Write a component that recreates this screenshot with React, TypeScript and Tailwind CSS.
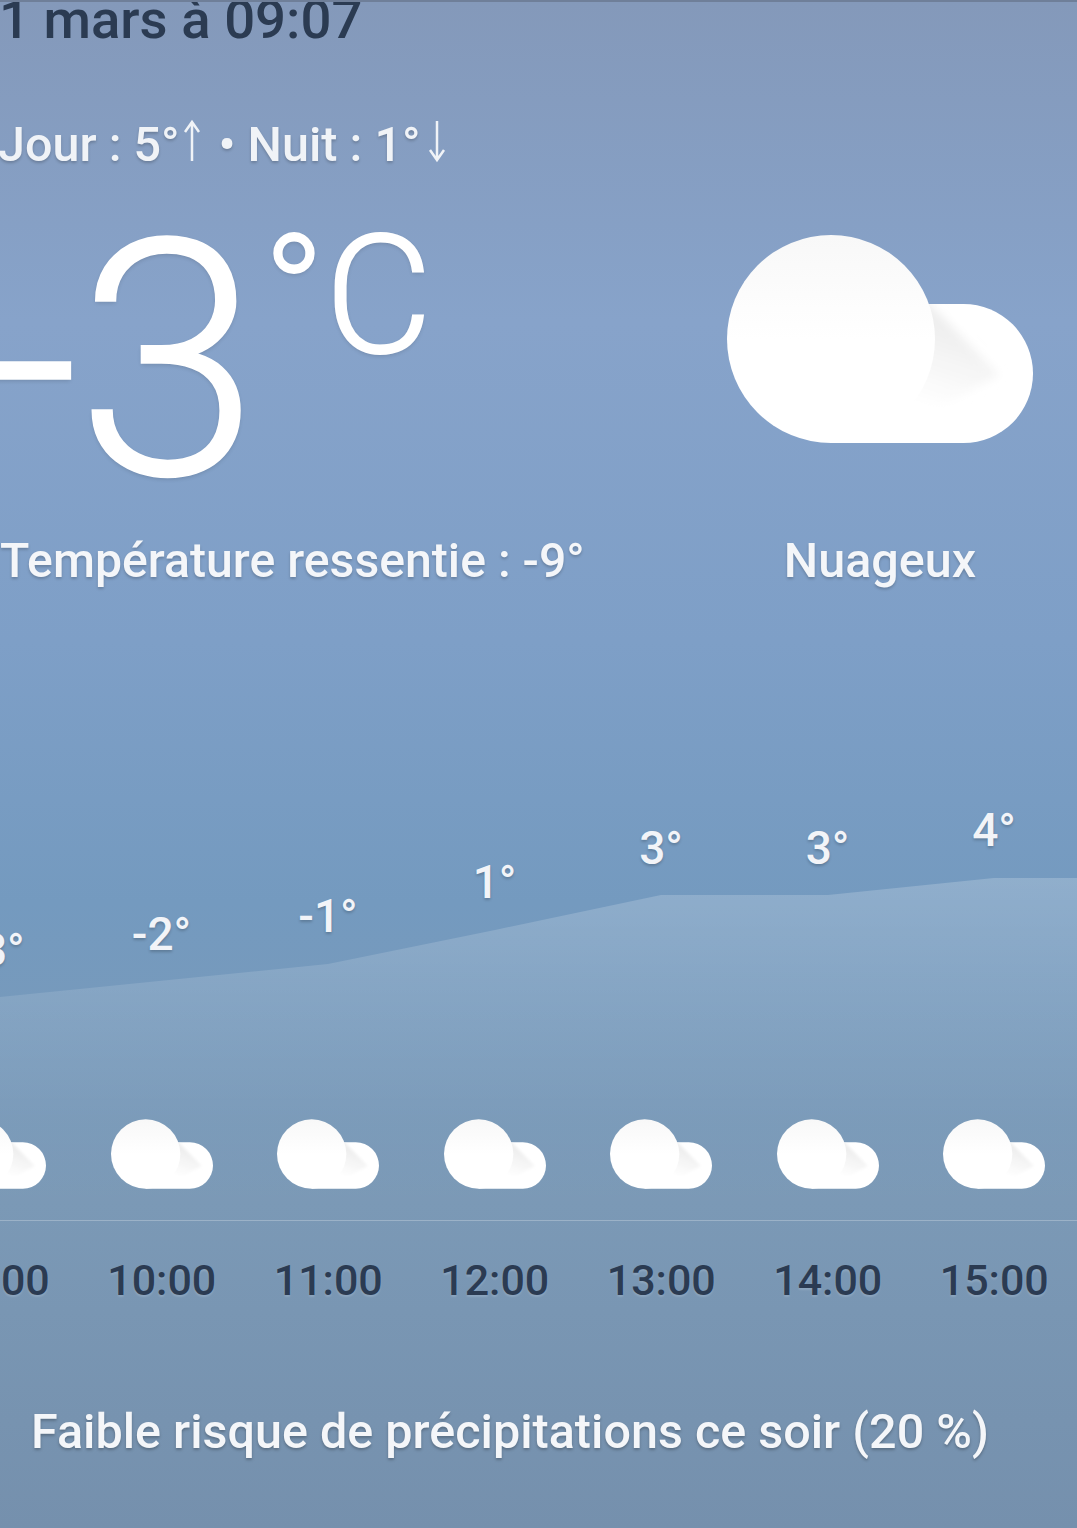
const hours = [
  { t: "09:00", v: "-3°", y: 950 },
  { t: "10:00", v: "-2°", y: 934 },
  { t: "11:00", v: "-1°", y: 916 },
  { t: "12:00", v: "1°", y: 882 },
  { t: "13:00", v: "3°", y: 848 },
  { t: "14:00", v: "3°", y: 848 },
  { t: "15:00", v: "4°", y: 830 },
];

function Cloud({ className, id }: { className: string; id: string }) {
  return (
    <svg viewBox="0 0 306 208" className={className}>
      <defs>
        <linearGradient id={`${id}-s`} x1="205" y1="85" x2="180" y2="165" gradientUnits="userSpaceOnUse">
          <stop offset="0" stopColor="#eeeeee" />
          <stop offset="1" stopColor="#ffffff" />
        </linearGradient>
        <linearGradient id={`${id}-c`} x1="0" y1="0" x2="0" y2="1">
          <stop offset="0" stopColor="#f8f8f8" />
          <stop offset="0.5" stopColor="#ffffff" />
        </linearGradient>
        <filter id={`${id}-b`} x="-20%" y="-20%" width="140%" height="140%">
          <feGaussianBlur stdDeviation="5" />
        </filter>
        <clipPath id={`${id}-l`}>
          <path d="M104 208H236.5a69.5 69.5 0 0 0 0-139H104Z" />
        </clipPath>
      </defs>
      <path d="M104 208H236.5a69.5 69.5 0 0 0 0-139H104Z" fill="#fff" />
      <g clipPath={`url(#${id}-l)`}>
        <path d="M196 62L272 140 L170 195Z" fill={`url(#${id}-s)`} filter={`url(#${id}-b)`} />
      </g>
      <circle cx="104" cy="104" r="104" fill={`url(#${id}-c)`} />
    </svg>
  );
}

export default function App() {
  return (
    <div className="relative w-[1077px] h-[1528px] overflow-hidden border-t-2 border-[#6f7f99] bg-[linear-gradient(180deg,#8499ba_0px,#87a3ca_320px,#7e9fc7_640px,#749abf_900px,#7b99b6_1200px,#7590ad_1528px)] font-['Roboto',sans-serif] text-white">
      <div className="mt-[-11px] ml-[-32px] text-[54.5px] leading-[56px] font-medium text-[#2b3b52]">11 mars à 09:07</div>

      <div className="mt-[71px] ml-[-2px] flex items-center text-[48.5px] leading-[54px] font-medium text-[#f0f3f7] [text-shadow:0_2px_3px_rgba(0,0,0,0.2)]">
        <span>Jour : 5°</span>
        <svg viewBox="0 0 24 44" className="w-[24px] h-[44px] mt-[-8px] shrink-0" fill="none" stroke="#f0f3f7" strokeWidth="2.5">
          <path d="M12 42V4M5 13L12 3l7 10" />
        </svg>
        <span className="ml-[15px]">• Nuit : 1°</span>
        <svg viewBox="0 0 24 44" className="w-[24px] h-[44px] mt-[-8px] ml-[4px] shrink-0" fill="none" stroke="#f0f3f7" strokeWidth="2.5">
          <path d="M12 2v38M5 31l7 10 7-10" />
        </svg>
      </div>

      <div className="mt-[46px] flex justify-between h-[352px]">
        <div>
          <div className="flex items-start h-[274px] font-light leading-none [-webkit-text-stroke:2px_white] [text-shadow:0_2px_4px_rgba(0,0,0,0.15)]">
            <span className="text-[330px] leading-[300px] ml-[-15px] mt-[-6px] tracking-[-3px]">-3</span>
            <span className="text-[165px] leading-[170px] ml-[6px] mt-[-7px]">°C</span>
          </div>
          <div className="mt-[42px] text-[48.2px] leading-[54px] font-medium text-[#f4f6f9] [text-shadow:0_2px_3px_rgba(0,0,0,0.2)]">Température ressentie : -9°</div>
        </div>
        <div className="w-[306px] mr-[44px] flex flex-col items-center pt-[17px]">
          <Cloud id="big" className="w-[306px] h-[208px] shrink-0" />
          <div className="mt-[91px] text-[48.5px] leading-[54px] font-medium text-[#f4f6f9] [text-shadow:0_2px_3px_rgba(0,0,0,0.2)]">Nuageux</div>
        </div>
      </div>

      <div className="relative mt-[271px] h-[574px] ml-0">
        <svg viewBox="0 0 1077 430" className="absolute left-0 top-0 w-[1077px] h-[430px]" preserveAspectRatio="none">
          <defs>
            <linearGradient id="area" x1="0" y1="0" x2="0" y2="1">
              <stop offset="0" stopColor="#ffffff" stopOpacity="0.2" />
              <stop offset="0.7" stopColor="#ffffff" stopOpacity="0.02" />
              <stop offset="1" stopColor="#ffffff" stopOpacity="0" />
            </linearGradient>
          </defs>
          <path d="M0 156L328 123 495 89 661 54H828L994 37H1077V379H0Z" fill="url(#area)" />
        </svg>
        {hours.map((h, i) => (
          <span
            key={h.t}
            className="absolute w-[120px] text-center -translate-x-1/2 -translate-y-1/2 text-[46px] leading-[54px] font-medium text-[#f2f4f8] [text-shadow:0_2px_3px_rgba(0,0,0,0.2)]"
            style={{ left: -5 + 166.5 * i, top: h.y - 841 }}
          >
            {h.v}
          </span>
        ))}
        <div className="absolute left-0 right-0 top-[278px] flex ml-[-88px]">
          {hours.map((h) => (
            <div key={h.t} className="w-[166.5px] shrink-0 flex justify-center">
              <Cloud id={`s${h.t.slice(0, 2)}`} className="w-[102px] h-[70px]" />
            </div>
          ))}
        </div>
        <div className="absolute left-0 right-0 top-[379px] h-px bg-white/25" />
        <div className="absolute left-0 right-0 top-[414px] flex ml-[-88px]">
          {hours.map((h) => (
            <div key={h.t} className="w-[166.5px] shrink-0 text-center text-[43px] leading-[50px] font-medium text-[#2b3b52] [text-shadow:0_2px_2px_rgba(255,255,255,0.15)]">
              {h.t}
            </div>
          ))}
        </div>
      </div>

      <div className="absolute left-[31px] top-[1403px] text-[48.5px] leading-[54px] font-medium text-[#f4f6f9] [text-shadow:0_2px_3px_rgba(0,0,0,0.25)]">Faible risque de précipitations ce soir (20 %)</div>
    </div>
  );
}
